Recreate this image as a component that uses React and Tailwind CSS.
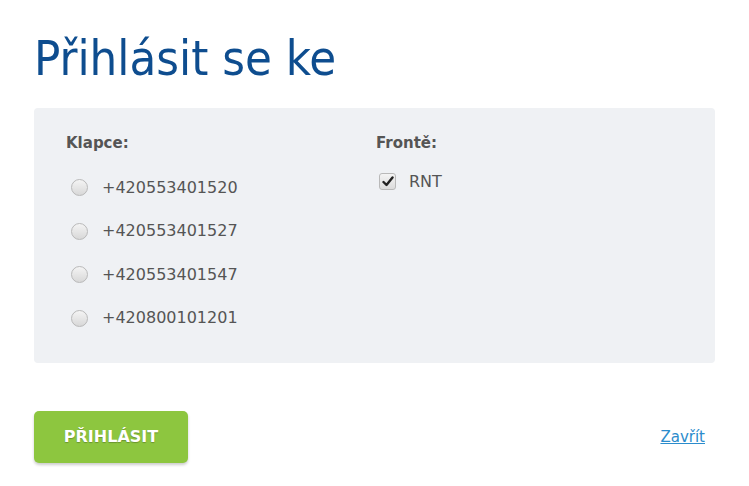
export default function App() {
  const phones = ["+420553401520", "+420553401527", "+420553401547", "+420800101201"];

  return (
    <div className="min-h-screen bg-white font-['DejaVu_Sans',sans-serif]">
      <div className="px-[34px] pt-[28px]">
        <h1 className="font-['DejaVu_Sans_Condensed','DejaVu_Sans',sans-serif] text-[48.6px] leading-[60px] text-[#0e4d8f]">
          Přihlásit se ke
        </h1>

        <div className="mt-[20px] h-[255px] rounded-[4px] bg-[#eff1f4] px-[32px] pt-[24px]">
          <div className="flex">
            <div className="w-[310px]">
              <div className="text-[15px] font-bold text-[#555]">Klapce:</div>
              <div className="mt-[23px] flex flex-col gap-[23.5px]">
                {phones.map((p) => (
                  <label key={p} className="flex h-[20px] items-center gap-[14px] text-[16px] text-[#555]">
                    <span className="ml-[5px] h-[17px] w-[17px] rounded-full border border-[#b9b9b9] bg-gradient-to-b from-[#f4f4f4] to-[#d8d8d8]" />
                    {p}
                  </label>
                ))}
              </div>
            </div>
            <div>
              <div className="text-[15px] font-bold text-[#555]">Frontě:</div>
              <label className="mt-[17px] flex h-[20px] items-center gap-[13px] text-[16px] text-[#555]">
                <span className="ml-[3px] flex h-[17px] w-[17px] items-center justify-center rounded-[3px] border border-[#b9b9b9] bg-gradient-to-b from-[#f4f4f4] to-[#dcdcdc]">
                  <svg width="12" height="11" viewBox="0 0 12 11">
                    <path d="M1.5 6 L4.5 9 L10.5 1.5" fill="none" stroke="#222" strokeWidth="2.4" strokeLinecap="round" strokeLinejoin="round" />
                  </svg>
                </span>
                RNT
              </label>
            </div>
          </div>
        </div>

        <div className="mt-[48px] flex items-center justify-between pr-[10px]">
          <button className="h-[52px] w-[154px] rounded-[5px] bg-[#8dc63f] text-[16px] font-bold text-white shadow-[0_2px_3px_rgba(0,0,0,0.2)] [text-shadow:0_1px_1px_rgba(0,0,0,0.25)]">
            PŘIHLÁSIT
          </button>
          <a href="#" className="text-[15px] text-[#2b8ccc] underline">Zavřít</a>
        </div>
      </div>
    </div>
  );
}
